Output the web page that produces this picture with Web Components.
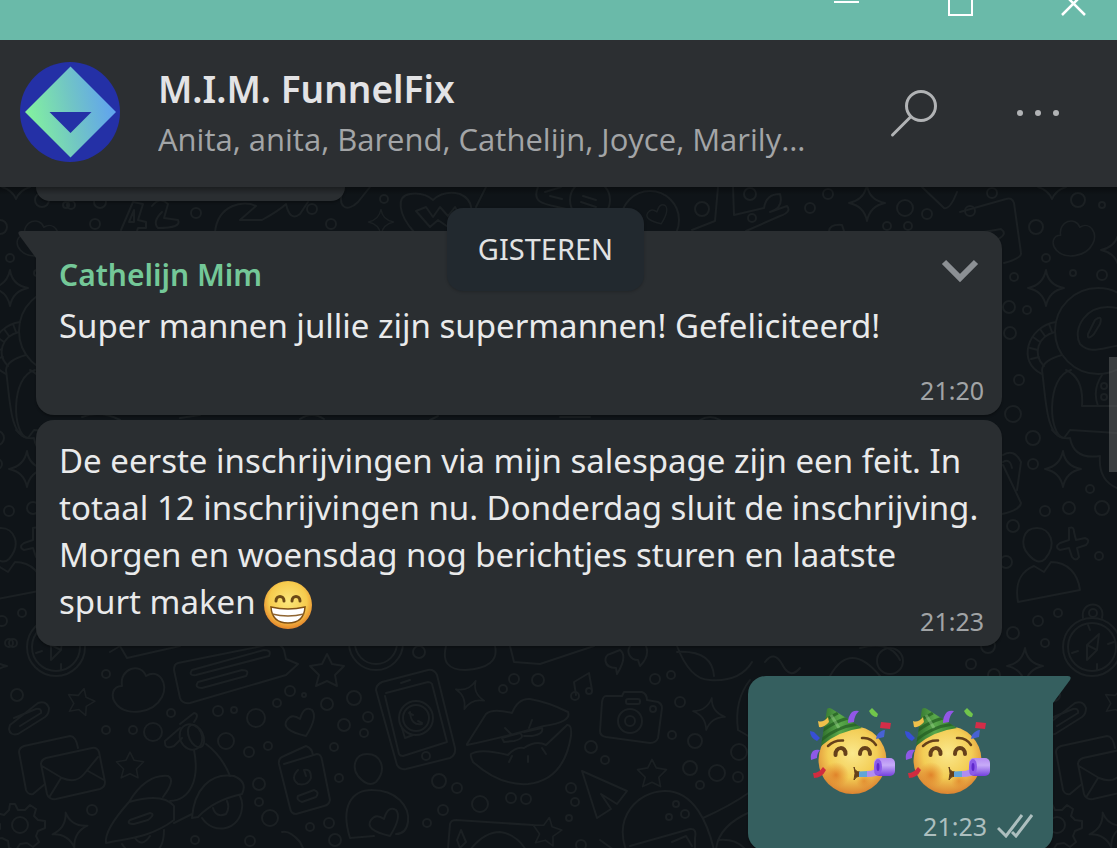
<!DOCTYPE html>
<html lang="nl">
<head>
<meta charset="utf-8">
<title>M.I.M. FunnelFix</title>
<style>
html, body{
    height: 100%;
    margin: 0;
}

body{
    font-family: "Noto Sans", "Open Sans", sans-serif;
    background: #0f1418;
    color: #e9eaeb;
}

.last-words{
    white-space: nowrap;
}
</style>
</head>
<body>

<chat-window>
    <title-bar slot="top"></title-bar>
    <chat-header slot="top">
        <span slot="name">M.I.M. FunnelFix</span>
        <span slot="members">Anita, anita, Barend, Cathelijn, Joyce, Marily…</span>
    </chat-header>
    <date-pill slot="date">GISTEREN</date-pill>
    <chat-bubble class="previous" cut></chat-bubble>
    <chat-bubble class="first" tail roomy menu time="21:20">
        <span slot="author">Cathelijn Mim</span>
        Super mannen jullie zijn supermannen! Gefeliciteerd!
    </chat-bubble>
    <chat-bubble time="21:23">De eerste inschrijvingen via mijn salespage zijn een feit. In totaal 12 inschrijvingen nu. Donderdag sluit de inschrijving. Morgen en woensdag nog berichtjes sturen en laatste <span class="last-words">spurt maken <chat-emoji name="grin"></chat-emoji></span></chat-bubble>
    <chat-bubble out tail time="21:23"><chat-emoji name="party"></chat-emoji><chat-emoji name="party"></chat-emoji></chat-bubble>
</chat-window>

<script>
function makeTemplate(html){
    const template = document.createElement('template');
    template.innerHTML = html;
    return template;
}

class BaseElement extends HTMLElement{

    constructor(){
        super();
        this.attachShadow({mode: 'open'});
        this.shadowRoot.appendChild(this.constructor.template.content.cloneNode(true));
    }

}

/* ---------- window ---------- */

class ChatWindow extends BaseElement{

    static template = makeTemplate(`
<style>
:host{
    display: flex;
    flex-direction: column;
    height: 100vh;
}

main{
    position: relative;
    flex: 1;
    min-height: 0;
    overflow: hidden;
}

chat-wallpaper{
    position: absolute;
    inset: 0;
}

.shade{
    position: absolute;
    inset: 0 0 auto 0;
    height: 8px;
    background: linear-gradient(rgba(0,0,0,.35), transparent);
}

.date{
    position: absolute;
    inset: 21px 26px auto 0;
    display: flex;
    justify-content: center;
}

.messages{
    position: relative;
    display: flex;
    flex-direction: column;
    align-items: flex-start;
    gap: 5px;
    padding: 0 64px 0 36px;
}

::slotted(chat-bubble.previous){
    width: 309px;
    min-height: 14px;
}

::slotted(chat-bubble.first){
    margin-top: 25px;
}

.thumb{
    position: absolute;
    top: 170px;
    right: 0;
    width: 8px;
    height: 115px;
    background: rgba(110,112,114,.45);
}
</style>
<slot name="top"></slot>
<main>
    <chat-wallpaper></chat-wallpaper>
    <div class="messages"><slot></slot></div>
    <div class="shade"></div>
    <div class="date"><slot name="date"></slot></div>
    <div class="thumb"></div>
</main>
`);

}

class TitleBar extends BaseElement{

    static template = makeTemplate(`
<style>
:host{
    display: flex;
    justify-content: flex-end;
    align-items: flex-start;
    gap: 87px;
    height: 40px;
    padding-right: 31px;
    background: #6abaa9;
}

button{
    display: block;
    padding: 0;
    border: 0;
    background: none;
}

svg{
    display: block;
    fill: none;
    stroke: #fff;
    stroke-width: 2;
}
</style>
<button aria-label="Minimaliseren"><svg width="26" height="18" viewBox="0 0 26 18"><path d="M0 2h25"/></svg></button>
<button aria-label="Maximaliseren"><svg width="26" height="18" viewBox="0 0 26 18"><path d="M2-9h23v24H2z"/></svg></button>
<button aria-label="Sluiten"><svg width="26" height="18" viewBox="0 0 26 18"><path d="M2-8l23 23M25-8L2 15" stroke-width="2.500"/></svg></button>
`);

}

class ChatHeader extends BaseElement{

    static template = makeTemplate(`
<style>
:host{
    display: flex;
    align-items: center;
    gap: 38px;
    flex: none;
    height: 147px;
    box-sizing: border-box;
    padding: 0 55px 0 20px;
    background: #2c2f32;
}

.avatar{
    flex: none;
    margin-bottom: 3px;
}

svg{
    display: block;
}

.titles{
    flex: 1;
    min-width: 0;
    white-space: nowrap;
}

h1, p{
    margin: 0;
    line-height: 50px;
}

h1{
    font-size: 37px;
    font-weight: 600;
    color: #e3e3e5;
}

p{
    font-family: "Open Sans", sans-serif;
    font-size: 31px;
    color: #a3a5a7;
    overflow: hidden;
    text-overflow: ellipsis;
}

.actions{
    display: flex;
    align-items: center;
    gap: 76px;
    margin-bottom: 2px;
}

button{
    padding: 0;
    border: 0;
    background: none;
    color: #b1b3b5;
}
</style>
<svg class="avatar" width="100" height="100" viewBox="0 0 100 100" role="img" aria-label="Groepsfoto">
    <defs>
        <linearGradient id="gem" x1="0" y1=".6" x2="1" y2=".4">
            <stop offset="0" stop-color="#84f59c"/>
            <stop offset=".5" stop-color="#72c7c3"/>
            <stop offset="1" stop-color="#5fa0f2"/>
        </linearGradient>
    </defs>
    <circle cx="50" cy="50" r="50" fill="#2430a6"/>
    <path d="M50.500 4.500L96 50 50.500 95.500 5 50z" fill="url(#gem)"/>
    <path d="M29.500 50h42L50.500 71z" fill="#2430a6"/>
</svg>
<div class="titles">
    <h1><slot name="name"></slot></h1>
    <p><slot name="members"></slot></p>
</div>
<div class="actions">
    <button aria-label="Zoeken">
        <svg width="50" height="50" viewBox="0 0 50 50" fill="none" stroke="currentColor" stroke-width="3" stroke-linecap="round">
            <circle cx="33" cy="18" r="14.500"/><path d="M22.500 29L4.500 47"/>
        </svg>
    </button>
    <button aria-label="Menu">
        <svg width="48" height="8" viewBox="0 0 48 8" fill="currentColor">
            <circle cx="6" cy="4" r="3"/><circle cx="24" cy="4" r="3"/><circle cx="42" cy="4" r="3"/>
        </svg>
    </button>
</div>
`);

}

/* ---------- messages ---------- */

class DatePill extends BaseElement{

    static template = makeTemplate(`
<style>
:host{
    display: block;
    padding: 0 31px 2px;
    border-radius: 16px;
    background: #22292f;
    box-shadow: 0 1px 3px rgba(0,0,0,.2);
    font-size: 29px;
    line-height: 81px;
    color: #e1e2e3;
}
</style>
<slot></slot>
`);

}

class ChatBubble extends BaseElement{

    static template = makeTemplate(`
<style>
:host{
    --fill: #2a2e31;
    position: relative;
    display: grid;
    box-sizing: border-box;
    width: calc(100% - 51px);
    padding: 17px 18px 9px 23px;
    border-radius: 18px;
    background: var(--fill);
    box-shadow: 0 2px 2px rgba(0,0,0,.25);
    font-size: 33px;
    line-height: 47px;
    color: #e9eaeb;
}

:host([cut]){
    padding: 0;
    border-radius: 0 0 18px 18px;
}

:host([cut]) .meta{
    display: none;
}

:host([tail]:not([out])){
    border-top-left-radius: 0;
}

:host([out]){
    --fill: #355f5f;
    align-self: flex-end;
    width: auto;
    margin-top: 25px;
    padding: 31px 20px 9px;
    border-top-right-radius: 0;
}

.body, .meta{
    grid-area: 1 / 1;
}

.body{
    padding-bottom: 12px;
}

:host([roomy]) .body{
    padding-bottom: 57px;
}

:host([out]) .body{
    display: flex;
    gap: 9px;
    padding: 0 42px 47px;
}

::slotted([slot="author"]){
    display: block;
    font-size: 30px;
    font-weight: 600;
    line-height: 54px;
    color: #74c898;
}

.meta{
    align-self: end;
    justify-self: end;
    display: flex;
    align-items: center;
    gap: 10px;
    font-size: 25px;
    line-height: 32px;
    color: #a1a4a6;
}

:host([out]) .meta{
    color: #adbfbf;
}

.tail, .ticks, .menu{
    display: none;
}

:host([tail]) .tail{
    display: block;
    position: absolute;
    top: 0;
    right: 100%;
    fill: var(--fill);
}

:host([tail][out]) .tail{
    right: auto;
    left: 100%;
    transform: scaleX(-1);
}

:host([out]) .ticks{
    display: block;
}

:host([menu]) .menu{
    display: block;
    position: absolute;
    top: 24px;
    right: 22px;
    padding: 0;
    border: 0;
    background: none;
}

.menu svg{
    display: block;
}
</style>
<svg class="tail" width="18" height="27" viewBox="0 0 18 27"><path d="M3 0H18V27L1 4Q-1 0 3 0z"/></svg>
<div class="body"><slot name="author"></slot><slot></slot></div>
<div class="meta">
    <time></time>
    <svg class="ticks" width="36" height="24" viewBox="0 0 36 24" fill="none" stroke="currentColor" stroke-width="3">
        <path d="M1 14L9 22 25 1M15 18L19 22 35 1"/>
    </svg>
</div>
<button class="menu" aria-label="Berichtopties">
    <svg width="40" height="32" viewBox="0 0 40 32" fill="none" stroke="#8c9094" stroke-width="6"><path d="M4 7l16 16L36 7"/></svg>
</button>
`);

    connectedCallback(){
        this.shadowRoot.querySelector('time').textContent = this.getAttribute('time') || '';
    }

}

/* ---------- emoji ---------- */

const emojis = {
    grin: `
<svg width="48" height="48" viewBox="0 0 48 48" role="img" aria-label="grijnzend gezicht">
    <defs>
        <radialGradient id="skin" cx=".5" cy=".42" r=".56">
            <stop offset="0" stop-color="#fbe77c"/><stop offset=".7" stop-color="#f6cb4d"/><stop offset="1" stop-color="#e78c2e"/>
        </radialGradient>
    </defs>
    <circle cx="24" cy="24" r="24" fill="url(#skin)"/>
    <path d="M12 20C12 14 20 14 20 20M28 20C28 14 36 14 36 20" fill="none" stroke="#6c4916" stroke-width="3" stroke-linecap="round"/>
    <path d="M7 26Q24 30 41 26Q40 42 24 42Q8 42 7 26z" fill="#fff" stroke="#805116" stroke-width="1.500"/>
    <path d="M8 33Q24 37 40 33" fill="none" stroke="#8f6532" stroke-width="1.500"/>
</svg>`,
    party: `
<svg width="86" height="88" viewBox="0 0 86 88" role="img" aria-label="feestend gezicht">
    <defs>
        <radialGradient id="skin" cx=".5" cy=".4" r=".6">
            <stop offset="0" stop-color="#fae88c"/><stop offset=".6" stop-color="#f3cd55"/><stop offset="1" stop-color="#dc8431"/>
        </radialGradient>
        <radialGradient id="cheek">
            <stop offset="0" stop-color="#de7c26" stop-opacity=".9"/><stop offset="1" stop-color="#e4882f" stop-opacity="0"/>
        </radialGradient>
        <linearGradient id="horn" x2="0" y2="1">
            <stop offset="0" stop-color="#b58cf2"/><stop offset=".4" stop-color="#c7abf8"/><stop offset="1" stop-color="#7440dd"/>
        </linearGradient>
        <linearGradient id="felt" x1="0" x2="1">
            <stop offset="0" stop-color="#2f6f2c"/><stop offset=".45" stop-color="#5aa84b"/><stop offset="1" stop-color="#2f7a2d"/>
        </linearGradient>
        <clipPath id="cone"><path d="M17 2Q19 0 22 2L52 21Q28 24 11 39z"/></clipPath>
    </defs>
    <circle cx="42.500" cy="53" r="34" fill="url(#skin)"/>
    <circle cx="26" cy="68" r="13" fill="url(#cheek)"/>
    <circle cx="54" cy="74" r="8" fill="url(#cheek)" opacity=".7"/>
    <g clip-path="url(#cone)">
        <path d="M11 0h42v40H11z" fill="url(#felt)"/>
        <path d="M10 34Q26 20 48 17M12 24Q24 15 38 11M14 14Q20 10 28 6" fill="none" stroke="#245f23" stroke-width="3" opacity=".75"/>
        <path d="M21 8L29 21" stroke="#a5dc96" stroke-width="3" opacity=".4"/>
    </g>
    <g fill="none" stroke="#65401a" stroke-linecap="round">
        <path d="M18 39Q24 33 33 33.500M52 31Q61 30 66 38" stroke-width="2.500"/>
        <path d="M25.500 48C25 39 36 39 35.500 47M50 47C50 39 60 39 60 47" stroke-width="4"/>
    </g>
    <path d="M44 60Q45 65 50 65V69Q46 69 44 73Q46 66 44 60z" fill="#65401a" stroke="#65401a"/>
    <path d="M49 64.500L58 64V70L49 70z" fill="#62a5d8"/>
    <path d="M57 64Q66 64 68 58L72 66Q67 70 57 70z" fill="#b08df0"/>
    <rect x="64" y="51" width="21" height="18" rx="5" fill="url(#horn)"/>
    <ellipse cx="68" cy="60" rx="4" ry="8" fill="#8c5bea"/>
    <ellipse cx="68" cy="60" rx="1.500" ry="4" fill="#5e28cc"/>
    <path d="M8 14Q13 16 18 10L19 15Q14 21 9 20z" fill="#f0c04b"/>
    <path d="M42 5Q45 3 49 4Q44 9 44 15L38 16Q38 9 42 5z" fill="#9257e6"/>
    <path d="M59 4L62 1L68 7L67 10Q62 10 59 4z" fill="#71c64b"/>
    <path d="M71 15L81 16 80 22 70 21z" fill="#d32d48"/>
    <path d="M67 28Q71 23 75 23L74 30L66 32z" fill="#4762d4"/>
    <path d="M0 24L4 25 10 31 7 34Q0 31 0 24z" fill="#374fd6"/>
    <path d="M3 44Q6 42 10 43Q7 46 7 51L1 53Q0 47 3 44z" fill="#8e59e6"/>
    <path d="M3 66Q9 66 13 60L16 63Q12 71 4 71z" fill="#d02c3f"/>
</svg>`
};

class ChatEmoji extends HTMLElement{

    constructor(){
        super();
        this.attachShadow({mode: 'open'});
    }

    connectedCallback(){
        this.shadowRoot.innerHTML = `
<style>
:host{
    display: inline-block;
    vertical-align: middle;
    line-height: 0;
}

:host([name="grin"]){
    margin: -8px 0;
}

svg{
    display: block;
}
</style>` + emojis[this.getAttribute('name')];
    }

}

/* ---------- wallpaper ---------- */

class ChatWallpaper extends BaseElement{

    static template = makeTemplate(`
<style>
:host{
    display: block;
    overflow: hidden;
    background: #0f1418;
}

svg{
    display: block;
    width: 100%;
    height: 100%;
    fill: none;
    stroke: #1b2023;
    stroke-width: 2;
    stroke-linejoin: round;
    stroke-linecap: round;
}
</style>
<svg aria-hidden="true">
    <defs>
        <path id="spark" d="M0-18Q2-3 18 0Q3 3 0 18Q-3 3-18 0Q-3-3 0-18z"/>
        <path id="star" d="M0-16L5-6 17-4 8 5 10 16 0 11-11 16-8 5-17-4-5-6z"/>
        <path id="cloud" d="M-17-6C-20-24 2-30 7-16C20-24 30-8 23 5C14 22-12 24-22 13C-30 4-26-6-17-6z"/>
        <path id="heart" d="M6 14Q-20 8-13-2Q-8-9 0-3Q4-17 12-12Q18-5 6 14z"/>

        <!-- right part of the tile, seen again at the left edge -->
        <g id="east">
            <path d="M960 212L1006 199Q1012 197 1014 203L1021 253Q1022 258 1004 263M984 232L1001 229Q1008 234 998 239L986 240"/>
            <use href="#cloud" x="1074" y="240" transform="translate(215 48) scale(.8)"/>
            <use href="#spark" x="1046" y="288"/>
            <use href="#spark" x="1119" y="250"/>
            <use href="#spark" x="1063" y="469"/>
            <use href="#spark" x="1025" y="666"/>
            <path d="M1038 187Q1048 190 1052 199Q1056 190 1066 187"/>
            <!-- astronaut -->
            <circle cx="1098" cy="331" r="43"/>
            <path d="M1117 308C1085 302 1072 330 1080 344C1092 356 1103 346 1130 344"/>
            <path d="M1088 334L1095 320Q1103 314 1100 324L1094 334Q1087 341 1088 334z"/>
            <path d="M1056 322C1028 326 1016 362 1042 374M1055 332C1038 336 1032 354 1044 366M1049 324l3 8M1040 329l5 7M1033 337l7 5M1030 348l8 2M1031 359l8-2"/>
            <path d="M1062 355Q1043 360 1042 370C1046 400 1046 436 1064 438L1070 430L1117 433M1071 370C1046 376 1048 436 1064 438M1066 370Q1084 378 1082 406H1117M1102 375Q1092 390 1098 406"/>
            <circle cx="1104" cy="386" r="3"/><circle cx="1104" cy="397" r="3"/>
            <path d="M1052 430Q1060 440 1070 438Q1074 460 1100 456Q1098 480 1117 488"/>
            <path d="M1003 455Q1014 448 1021 462L1017 490M1003 462Q1010 458 1012 468M1003 465L1021 503Q1020 510 1002 514"/>
            <!-- contact -->
            <path d="M1037 528C1022 528 1020 545 1028 554Q1038 566 1045 559C1058 544 1050 528 1037 528z"/>
            <path d="M1018 602C1014 580 1024 570 1034 566L1044 572L1051 562C1068 562 1078 574 1080 590z"/>
            <path d="M1069 528q5-2 5 4l2 8 9-2q6 2 1 7l-9 3 2 9q-3 5-7 0l-3-9-9 2q-6-3 0-7l9-3z"/>
            <!-- compass -->
            <circle cx="1092" cy="647" r="29"/><circle cx="1092" cy="647" r="24"/>
            <path d="M1099 634L1097 650 1087 660 1087 645zM1087 645l10 5M1088 625l2 5M1072 653l6-2M1097 670v-6M1108 644l6-2"/>
            <path d="M1083 618C1080 600 1106 600 1102 618"/><circle cx="1093" cy="613" r="4"/>
            <circle cx="992" cy="193" r="5"/><circle cx="1078" cy="200" r="7"/><circle cx="1102" cy="205" r="3"/>
            <circle cx="1036" cy="227" r="7"/><circle cx="1046" cy="258" r="4"/><circle cx="1073" cy="273" r="3"/>
            <circle cx="1102" cy="275" r="5"/><circle cx="1014" cy="277" r="4"/><circle cx="1009" cy="307" r="6"/>
            <circle cx="1027" cy="310" r="4"/><circle cx="1010" cy="333" r="6"/><circle cx="1019" cy="380" r="5"/>
            <circle cx="1013" cy="414" r="8"/><circle cx="1033" cy="438" r="7"/><circle cx="1033" cy="464" r="5"/>
            <circle cx="1090" cy="489" r="4"/><circle cx="1069" cy="508" r="6"/><circle cx="1102" cy="508" r="7"/>
            <circle cx="1045" cy="511" r="5"/><circle cx="1013" cy="526" r="6"/><circle cx="1099" cy="556" r="4"/>
            <circle cx="1006" cy="562" r="6"/><circle cx="1038" cy="621" r="5"/><circle cx="1058" cy="613" r="4"/>
            <circle cx="1013" cy="633" r="6"/><circle cx="1045" cy="643" r="4"/><circle cx="988" cy="646" r="7"/>
        </g>

        <!-- left bottom part, seen again at the right edge -->
        <g id="west">
            <path d="M45 784L33 794Q28 795 26 790L19 752Q19 748 24 746L70 736Q76 736 78 748"/>
            <path d="M46 758L92 748Q97 747 99 752L105 782Q105 787 100 789L56 799Q49 800 47 794L41 764Q41 760 46 758zM42 766L62 778Q76 784 84 774L98 757M50 796L61 778M88 771L104 780"/>
            <path d="M10 725L38 703Q46 700 49 708Q49 714 45 717L18 734Q10 736 9 729zM14 718L36 709Q42 708 41 713L20 726"/>
            <use href="#star" transform="translate(81 701) rotate(14) scale(.8)"/>
            <path d="M15 804l3 6h7l5-5 6 4-2 7 4 4 7 1v7l-7 3-2 5 3 6-6 5-6-4-7 1-4 6-7-2-1-7-6-3-6 1-2-6 6-4v-5l-6-5 3-6 7 2 5-5 1-6z"/>
            <circle cx="20" cy="825" r="8"/>
            <use href="#spark" transform="translate(70 830) rotate(-14)"/>
            <circle cx="17" cy="695" r="6"/><circle cx="92" cy="810" r="5"/><circle cx="106" cy="730" r="4"/><circle cx="106" cy="674" r="4"/>
        </g>
    </defs>

    <g transform="translate(0 -187)">
        <use href="#east"/>
        <use href="#east" x="-1036"/>
        <use href="#west"/>
        <use href="#west" x="1037"/>

        <!-- strip under the header -->
        <path d="M121 230L133 202L143 204L138 220L146 222V228H138L136 234M134 210l-5 12h5zM152 206Q160 196 168 204L164 218 178 220Q182 228 158 228Q152 222 162 212"/>
        <path d="M215 232C218 204 244 200 256 206L240 220L262 220Q280 210 286 204Q290 222 300 214L308 202M344 187C336 206 346 214 358 202L370 187"/>
        <path d="M414 232C398 214 396 196 410 194Q424 192 433 200Q444 190 460 194C474 200 474 214 466 226"/>
        <path d="M416 211L426 207 433 217 440 207 448 216 455 207 458 212 448 227 438 220 430 227z"/>
        <use href="#spark" transform="translate(381 222) scale(.7)"/>
        <use href="#spark" x="867" y="203"/>
        <path d="M486 187L476 207M538 187C530 206 550 204 570 210M545 192l16-5M550 196l12 3"/>
        <circle cx="590" cy="200" r="20"/><path d="M583 196l13 4M581 202l15 5"/>
        <circle cx="650" cy="220" r="29"/>
        <use href="#heart" transform="translate(657 214) scale(.7)"/>
        <path d="M718 187L715 221L692 230M733 187L734 215L764 208Q766 194 780 194Q784 208 770 212L787 206Q792 212 780 216L746 231M829 231Q830 224 842 225L844 231"/>
        <circle cx="702" cy="209" r="7"/><circle cx="750" cy="194" r="6"/><circle cx="752" cy="218" r="4"/>
        <circle cx="828" cy="194" r="5"/><circle cx="810" cy="208" r="5"/><circle cx="905" cy="208" r="8"/>
        <circle cx="927" cy="214" r="5"/><circle cx="887" cy="226" r="4"/><circle cx="908" cy="226" r="4"/>
        <circle cx="970" cy="211" r="5"/><circle cx="312" cy="209" r="5"/><circle cx="331" cy="224" r="5"/>
        <circle cx="384" cy="199" r="4"/><circle cx="196" cy="213" r="5"/><circle cx="95" cy="224" r="5"/>
        <circle cx="71" cy="205" r="4"/><circle cx="100" cy="202" r="6"/><path d="M922 187L944 208Q950 210 957 192"/>

        <!-- between the bubbles -->
        <path d="M82 417Q100 410 120 420M180 418l20-3M300 419q12-8 24 0M430 420l8-4M560 417h30M700 420q10-6 20 0"/>

        <!-- lower left -->
        <path d="M110 652L120 646 127 658 180 646M178 663L262 646Q280 640 284 650L286 659L298 664 286 675 190 703Q182 704 180 698L174 670Q174 664 178 663z"/>
        <path d="M192 670L264 650Q272 650 269 656L196 675Q188 676 192 670zM198 682L242 670Q250 670 246 676L202 688Q194 688 198 682z"/>
        <use href="#cloud" transform="translate(139 692)"/>
        <use href="#star" x="327" y="670"/>
        <use href="#star" transform="translate(130 765) scale(.8)"/>
        <!-- scooter -->
        <ellipse cx="191" cy="737" rx="11" ry="13" transform="rotate(-25 191 737)"/><ellipse cx="196" cy="736" rx="7" ry="12" transform="rotate(-25 196 736)"/>
        <path d="M180 724L194 713Q200 714 194 722M180 728L165 741Q164 750 174 746L182 738M194 750C200 780 190 800 170 801M206 744Q222 756 230 776"/>
        <path d="M129 802Q146 774 168 776Q176 780 163 797M129 802C150 796 166 796 174 806L174 820C150 838 128 838 106 843Q104 830 129 802zM130 820L150 813Q156 814 148 820L134 824Q126 824 130 820z"/>
        <path d="M192 818C194 790 210 772 234 776Q248 782 242 794Q214 800 198 817zM174 823L192 814M202 818C214 836 240 830 242 808Q243 802 240 796M213 808Q216 818 226 814Q230 808 227 801M122 844Q126 850 128 850M135 838Q142 848 150 836M164 830Q164 844 158 850"/>
        <use href="#heart" x="300" y="722"/>
        <!-- booklet -->
        <path d="M284 764L317 754Q321 754 322 760L330 800Q329 805 324 806L296 814Q291 814 290 808L279 764Q278 758 284 756L306 746Q312 748 313 755"/>
        <path d="M298 770Q290 778 298 784 308 786 311 778 311 768 304 770L306 776M298 796L314 790Q320 792 316 797L302 802Q296 800 298 796zM282 832Q290 830 300 842L304 850"/>
        <path d="M367 754C354 754 352 768 358 776Q368 788 376 782C388 768 380 754 367 754z"/>
        <path d="M350 838C340 806 352 790 372 790C396 790 410 806 408 822Q406 834 396 834M350 838L374 836"/>
        <use href="#heart" x="384" y="822"/>

        <!-- phone -->
        <path d="M382 682L428 670Q434 669 437 675L455 748Q456 755 450 758L406 769Q400 770 397 765L376 690Q376 685 382 682z"/>
        <path d="M386 693L428 682Q431 682 432 684L447 742L403 756Q400 756 399 754L385 696M401 683l9-3"/>
        <circle cx="416" cy="718" r="17"/><circle cx="416" cy="718" r="13"/><path d="M402 728l3 10 8-3M410 712q1 14 12 12M409 713l4 2M418 721l4 2"/><circle cx="426" cy="756" r="4"/>
        <circle cx="376" cy="643" r="27"/><circle cx="376" cy="643" r="21"/>
        <path d="M446 646Q440 670 465 670Q500 668 495 646M510 646L514 662 540 664 594 646M610 654C604 654 602 668 616 668L617 674Q628 656 620 650zM630 646C626 652 630 660 638 660L640 666Q650 656 646 646"/>
        <path d="M677 646Q690 680 710 680Q740 682 752 662M677 652Q712 650 714 676"/>
        <use href="#spark" transform="translate(470 695) rotate(22) scale(.85)"/>
        <path d="M576 695L574 682 589 673 592 690"/><circle cx="575" cy="696" r="4"/><circle cx="589" cy="691" r="3"/>
        <!-- lips -->
        <path d="M467 744L486 714Q492 708 512 713Q518 698 530 699Q548 702 568 712Q572 722 544 726Q500 738 467 745z"/>
        <path d="M471 754Q480 748 508 755Q516 746 524 748Q536 740 546 745Q562 730 567 725Q572 724 571 736Q564 780 528 784Q500 786 473 762Q470 756 471 754zM502 738L520 733Q526 738 514 741L504 742zM524 732L542 728Q544 734 532 736L524 736M505 728l6 6M532 720l-3 8M512 756l-3 6M528 756v6M542 748l4 6"/>
        <!-- camera -->
        <path d="M606 696L622 696 624 692 642 692Q647 694 647 700L658 702Q662 704 662 708L658 738Q656 743 650 743L606 737Q600 736 600 731L602 702Q603 696 606 696z"/>
        <circle cx="630" cy="721" r="12"/><circle cx="630" cy="721" r="5"/><rect x="626" y="699" width="14" height="5" rx="2"/><circle cx="653" cy="709" r="3"/>
        <use href="#spark" transform="translate(709 714) rotate(10) scale(.9)"/>
        <use href="#star" transform="translate(652 773) scale(.85)"/>
        <use href="#star" transform="translate(547 831) rotate(10) scale(.85)"/>
        <path d="M582 771L627 791 617 804 601 794 611 809 597 818z"/>
        <path d="M448 848L450 824Q451 820 456 820L533 825M461 830l5 12-6 6-3-8zM470 850Q484 832 500 832Q516 834 526 850M600 840l14 10"/>
        <path d="M626 850C614 816 638 792 664 791C694 790 708 824 714 850M630 846L690 829Q697 828 695 838V850M672 842L686 836 692 846M703 818Q730 806 750 792M716 850Q718 826 750 812M718 840Q736 838 746 850"/>
        <path d="M750 680Q734 700 738 730L750 737"/>
        <path d="M765 662Q774 650 782 664Q790 680 800 668M830 676Q850 640 880 676M860 648Q890 640 900 660"/>
        <circle cx="890" cy="661" r="13"/>

        <circle cx="13" cy="643" r="4"/><circle cx="171" cy="713" r="4"/><circle cx="218" cy="711" r="5"/>
        <circle cx="234" cy="710" r="3"/><circle cx="256" cy="718" r="9"/><circle cx="226" cy="741" r="8"/>
        <circle cx="153" cy="732" r="9"/><circle cx="133" cy="730" r="4"/><circle cx="249" cy="752" r="5"/>
        <circle cx="268" cy="746" r="4"/><circle cx="290" cy="691" r="5"/><circle cx="277" cy="703" r="4"/>
        <circle cx="304" cy="695" r="2"/><circle cx="327" cy="704" r="6"/><circle cx="354" cy="698" r="7"/>
        <circle cx="368" cy="717" r="5"/><circle cx="344" cy="725" r="6"/><circle cx="364" cy="733" r="4"/>
        <circle cx="334" cy="747" r="4"/><circle cx="339" cy="778" r="4"/><circle cx="259" cy="784" r="6"/>
        <circle cx="259" cy="802" r="4"/><circle cx="270" cy="818" r="8"/><circle cx="310" cy="827" r="4"/>
        <circle cx="329" cy="823" r="5"/><circle cx="335" cy="840" r="6"/><circle cx="250" cy="841" r="5"/>
        <circle cx="195" cy="840" r="4"/><circle cx="419" cy="652" r="6"/><circle cx="503" cy="689" r="4"/>
        <circle cx="514" cy="679" r="5"/><circle cx="538" cy="680" r="6"/><circle cx="439" cy="781" r="7"/>
        <circle cx="457" cy="788" r="5"/><circle cx="480" cy="804" r="8"/><circle cx="511" cy="798" r="5"/>
        <circle cx="526" cy="799" r="5"/><circle cx="443" cy="810" r="5"/><circle cx="427" cy="823" r="4"/>
        <circle cx="571" cy="788" r="5"/><circle cx="575" cy="802" r="4"/><circle cx="569" cy="818" r="3"/>
        <circle cx="591" cy="747" r="6"/><circle cx="605" cy="760" r="4"/><circle cx="655" cy="679" r="5"/>
        <circle cx="671" cy="675" r="4"/><circle cx="680" cy="702" r="5"/><circle cx="672" cy="735" r="4"/>
        <circle cx="695" cy="741" r="7"/><circle cx="739" cy="752" r="8"/><circle cx="690" cy="768" r="7"/>
        <circle cx="717" cy="773" r="8"/><circle cx="738" cy="777" r="5"/><circle cx="700" cy="785" r="4"/>
        <circle cx="676" cy="804" r="3"/><circle cx="685" cy="814" r="4"/><circle cx="669" cy="817" r="3"/>
        <circle cx="581" cy="845" r="5"/><circle cx="971" cy="664" r="5"/><circle cx="994" cy="675" r="6"/>
    </g>
</svg>
`);

}

customElements.define('chat-wallpaper', ChatWallpaper);
customElements.define('title-bar', TitleBar);
customElements.define('chat-header', ChatHeader);
customElements.define('date-pill', DatePill);
customElements.define('chat-emoji', ChatEmoji);
customElements.define('chat-bubble', ChatBubble);
customElements.define('chat-window', ChatWindow);
</script>
</body>
</html>
